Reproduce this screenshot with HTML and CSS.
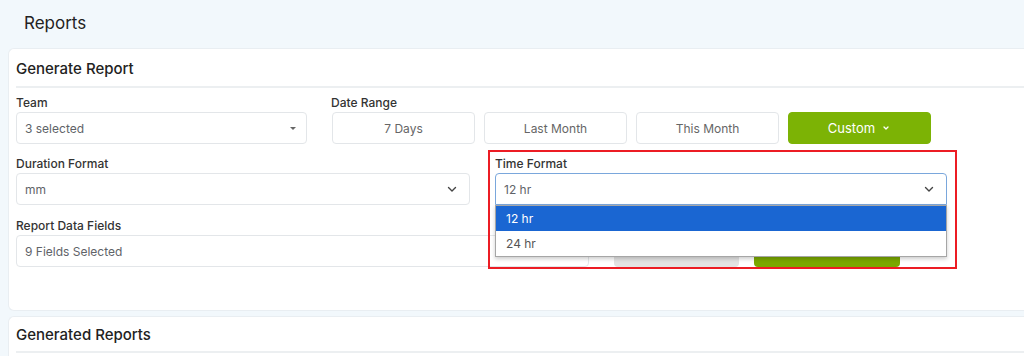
FILE: index.html
```html
<!DOCTYPE html>
<html lang="en">
<head>
    <meta charset="UTF-8">
    <meta name="viewport" content="width=device-width, initial-scale=1.0">
    <title>Reports</title>
    <link rel="stylesheet" href="styles.css">
</head>
<body>
    <div class="page-title">Reports</div>

    <div class="card">
        <div class="card-header">Generate Report</div>
        <div class="card-body">

            <div class="row row-top">
                <div class="field">
                    <label>Team</label>
                    <div class="control">
                        <span>3 selected</span>
                        <span class="caret"></span>
                    </div>
                </div>
                <div class="field">
                    <label class="date-label">Date Range</label>
                    <div class="range-buttons">
                        <button class="range-btn">7 Days</button>
                        <button class="range-btn">Last Month</button>
                        <button class="range-btn">This Month</button>
                        <button class="range-btn active">Custom
                            <svg width="10" height="10" viewBox="0 0 10 10"><path d="M3 4l2 2 2-2" fill="none" stroke="#fff" stroke-width="1.3" stroke-linecap="round" stroke-linejoin="round"/></svg>
                        </button>
                    </div>
                </div>
            </div>

            <div class="row row-mid">
                <div class="field">
                    <label>Duration Format</label>
                    <div class="control">
                        <span>mm</span>
                        <svg class="chevron" width="12" height="12" viewBox="0 0 12 12"><path d="M2.5 4.5l3.5 3.5 3.5-3.5" fill="none" stroke="#444" stroke-width="1.4" stroke-linecap="round" stroke-linejoin="round"/></svg>
                    </div>
                </div>
                <div class="field time-field">
                    <label>Time Format</label>
                    <div class="control focused">
                        <span>12 hr</span>
                        <svg class="chevron" width="12" height="12" viewBox="0 0 12 12"><path d="M2.5 4.5l3.5 3.5 3.5-3.5" fill="none" stroke="#444" stroke-width="1.4" stroke-linecap="round" stroke-linejoin="round"/></svg>
                    </div>
                    <ul class="options">
                        <li class="selected">12 hr</li>
                        <li>24 hr</li>
                    </ul>
                    <div class="highlight"></div>
                </div>
            </div>

            <div class="row-bottom">
                <div class="field data-fields">
                    <label>Report Data Fields</label>
                    <div class="control">
                        <span>9 Fields Selected</span>
                    </div>
                </div>
                <button class="action-btn reset">Reset</button>
                <button class="action-btn generate">Generate</button>
            </div>

        </div>
    </div>

    <div class="card card-list">
        <div class="card-header">Generated Reports</div>
    </div>
</body>
</html>
```

FILE: styles.css
```css
/* Basic Reset */
* {
    margin: 0;
    padding: 0;
    box-sizing: border-box;
}

body {
    font-family: Inter, 'Noto Sans', sans-serif;
    background-color: #f2f8fc;
    color: #333;
    overflow: hidden;
}

.page-title {
    height: 48px;
    padding-left: 24px;
    line-height: 46px;
    font-size: 17px;
    color: #222;
}

.card {
    margin-left: 8px;
    background-color: #fff;
    border: 1px solid #e9eef2;
    border-right: none;
    border-radius: 6px 0 0 6px;
    height: 263px;
}

.card-header {
    margin: 0 0 0 7px;
    height: 39px;
    line-height: 39px;
    font-size: 15px;
    font-weight: 500;
    color: #222;
    border-bottom: 2px solid #eceff1;
}

.card-body {
    padding: 7px 0 0 7px;
}

/* Rows */
.row {
    display: grid;
}

.row-top {
    grid-template-columns: 291px 600px;
    column-gap: 25px;
}

.row-mid {
    grid-template-columns: 454px 452px;
    column-gap: 25px;
    margin-top: 12px;
}

.row-bottom {
    display: flex;
    align-items: flex-end;
    margin-top: 13px;
}

.data-fields {
    width: 573px;
    margin-right: 25px;
}

label {
    display: block;
    font-size: 12px;
    font-weight: 500;
    line-height: 16px;
    margin-bottom: 1px;
    color: #333;
}

.date-label {
    margin-left: -1px;
}

.control {
    height: 32px;
    border: 1px solid #e3e6e9;
    border-radius: 4px;
    display: flex;
    align-items: center;
    justify-content: space-between;
    padding: 0 12px 0 8px;
    font-size: 12px;
    color: #5f6368;
}

.control.focused {
    border-color: #7aa7dc;
    border-radius: 4px 4px 0 0;
}

.caret {
    width: 0;
    height: 0;
    border-left: 3px solid transparent;
    border-right: 3px solid transparent;
    border-top: 3px solid #666;
    margin-right: -2px;
}

.chevron {
    margin-right: -1px;
}

/* Date range buttons */
.range-buttons {
    display: grid;
    grid-template-columns: repeat(4, 143px);
    column-gap: 9px;
}

.range-btn {
    height: 32px;
    border: 1px solid #e3e6e9;
    border-radius: 4px;
    background-color: #fff;
    font-family: inherit;
    font-size: 12px;
    color: #666;
}

.range-btn.active {
    background-color: #7cb305;
    border-color: #7cb305;
    color: #fff;
    font-size: 13px;
    display: flex;
    align-items: center;
    justify-content: center;
    gap: 6px;
}

/* Time format dropdown */
.time-field {
    position: relative;
}

.options {
    position: absolute;
    top: 100%;
    left: 0;
    right: 0;
    list-style: none;
    background-color: #fff;
    border: 1px solid #a6a6a6;
    box-shadow: 0 2px 4px rgba(0, 0, 0, 0.2);
    z-index: 2;
}

.options li {
    height: 25px;
    line-height: 25px;
    padding-left: 10px;
    font-size: 12px;
    color: #555;
}

.options li.selected {
    background-color: #1a66d2;
    color: #fff;
}

.highlight {
    position: absolute;
    left: -7px;
    top: -6px;
    width: 469px;
    height: 119px;
    border: 2px solid #ec1c24;
    z-index: 3;
}

/* Bottom buttons */
.action-btn {
    height: 33px;
    border: none;
    border-radius: 4px;
    font-family: inherit;
    font-size: 13px;
    color: #fff;
}

.reset {
    width: 125px;
    margin-right: 15px;
    background-color: #e3e3e3;
    color: #555;
}

.generate {
    width: 146px;
    background-color: #7aa800;
}

/* Generated reports */
.card-list {
    margin-top: 5px;
    height: 60px;
}

.card-list .card-header {
    height: 36px;
    line-height: 36px;
}
```
